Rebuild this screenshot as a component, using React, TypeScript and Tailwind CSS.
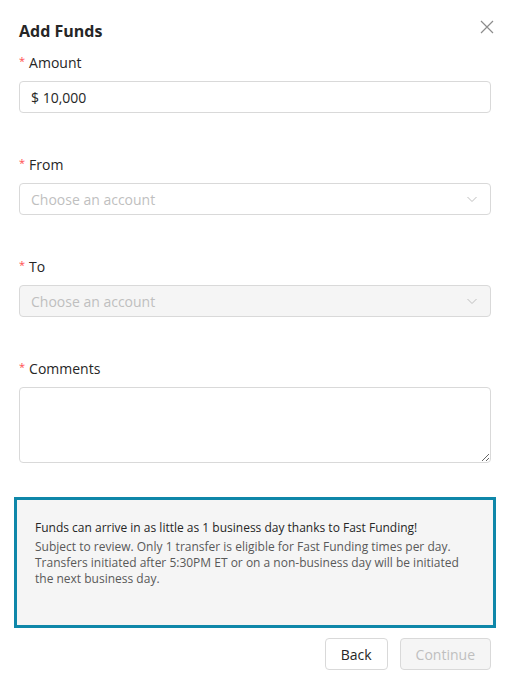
import React from 'react'

const styles = {
  label: "flex items-center h-[22px] text-[14px] text-[#262626]",
  star: "text-[#ff4d4f] text-[11px] mr-[4px] leading-none -mt-[3px]",
  input:
    "h-[32px] w-full border border-[#d9d9d9] rounded-[4px] px-[11px] text-[14px] text-[#262626] outline-none",
  select:
    "h-[32px] w-full border border-[#d9d9d9] rounded-[4px] pl-[11px] pr-[12px] flex items-center justify-between text-[14px] text-[#bfbfbf]",
}

const Chevron = () => (
  <svg width="12" height="12" viewBox="0 0 12 12" fill="none">
    <path d="M1.5 4l4.5 4.5L10.5 4" stroke="#bfbfbf" strokeWidth="1" />
  </svg>
)

const Label = ({ text }: { text: string }) => (
  <label className={styles.label}>
    <span className={styles.star}>*</span>
    {text}
  </label>
)

const App = () => {
  return (
    <div
      className="w-[512px] h-[685px] bg-white px-[19px] pt-[19px] relative"
      style={{ fontFamily: '"Open Sans", sans-serif' }}
    >
      <div className="w-[472px] flex items-center justify-between h-[24px]">
        <h5 className="text-[16px] font-bold text-[#262626]">Add Funds</h5>
        <button type="button" className="-mr-[3px] -mt-[8px]">
          <svg width="14" height="14" viewBox="0 0 14 14">
            <path d="M1 1l12 12M13 1L1 13" stroke="#8c8c8c" strokeWidth="1.2" />
          </svg>
        </button>
      </div>

      <div className="mt-[8px] w-[472px]">
        <Label text="Amount" />
        <input className={`${styles.input} mt-[8px]`} defaultValue="$ 10,000" />

        <div className="mt-[40px]">
          <Label text="From" />
          <div className={`${styles.select} mt-[8px]`}>
            <span>Choose an account</span>
            <Chevron />
          </div>
        </div>

        <div className="mt-[40px]">
          <Label text="To" />
          <div className={`${styles.select} mt-[8px] bg-[#f5f5f5]`}>
            <span>Choose an account</span>
            <Chevron />
          </div>
        </div>

        <div className="mt-[40px]">
          <Label text="Comments" />
          <textarea className="mt-[8px] block w-full h-[76px] border border-[#d9d9d9] rounded-[4px] px-[11px] py-[4px] text-[14px] outline-none" />
        </div>
      </div>

      <div className="mt-[34px] w-[482px] -ml-[5px] border-[3px] border-[#0f87a9] bg-[#f5f5f5] pl-[18px] pr-[20px] pt-[20px] pb-[38px] text-[12px] leading-[16px]">
        <p className="text-[#262626]">
          Funds can arrive in as little as 1 business day thanks to Fast Funding!
        </p>
        <p className="mt-[3px] text-[#595959]">
          Subject to review. Only 1 transfer is eligible for Fast Funding times per day.
          Transfers initiated after 5:30PM ET or on a non-business day will be initiated
          the next business day.
        </p>
      </div>

      <div className="mt-[10px] w-[472px] flex justify-end gap-[12px]">
        <button
          type="button"
          className="h-[32px] px-[15px] border border-[#d9d9d9] rounded-[4px] bg-white text-[14px] text-[#262626]"
        >
          Back
        </button>
        <button
          type="button"
          disabled
          className="h-[32px] px-[15px] border border-[#d9d9d9] rounded-[4px] bg-[#f5f5f5] text-[14px] text-[#bfbfbf]"
        >
          Continue
        </button>
      </div>
    </div>
  )
}

export default App
